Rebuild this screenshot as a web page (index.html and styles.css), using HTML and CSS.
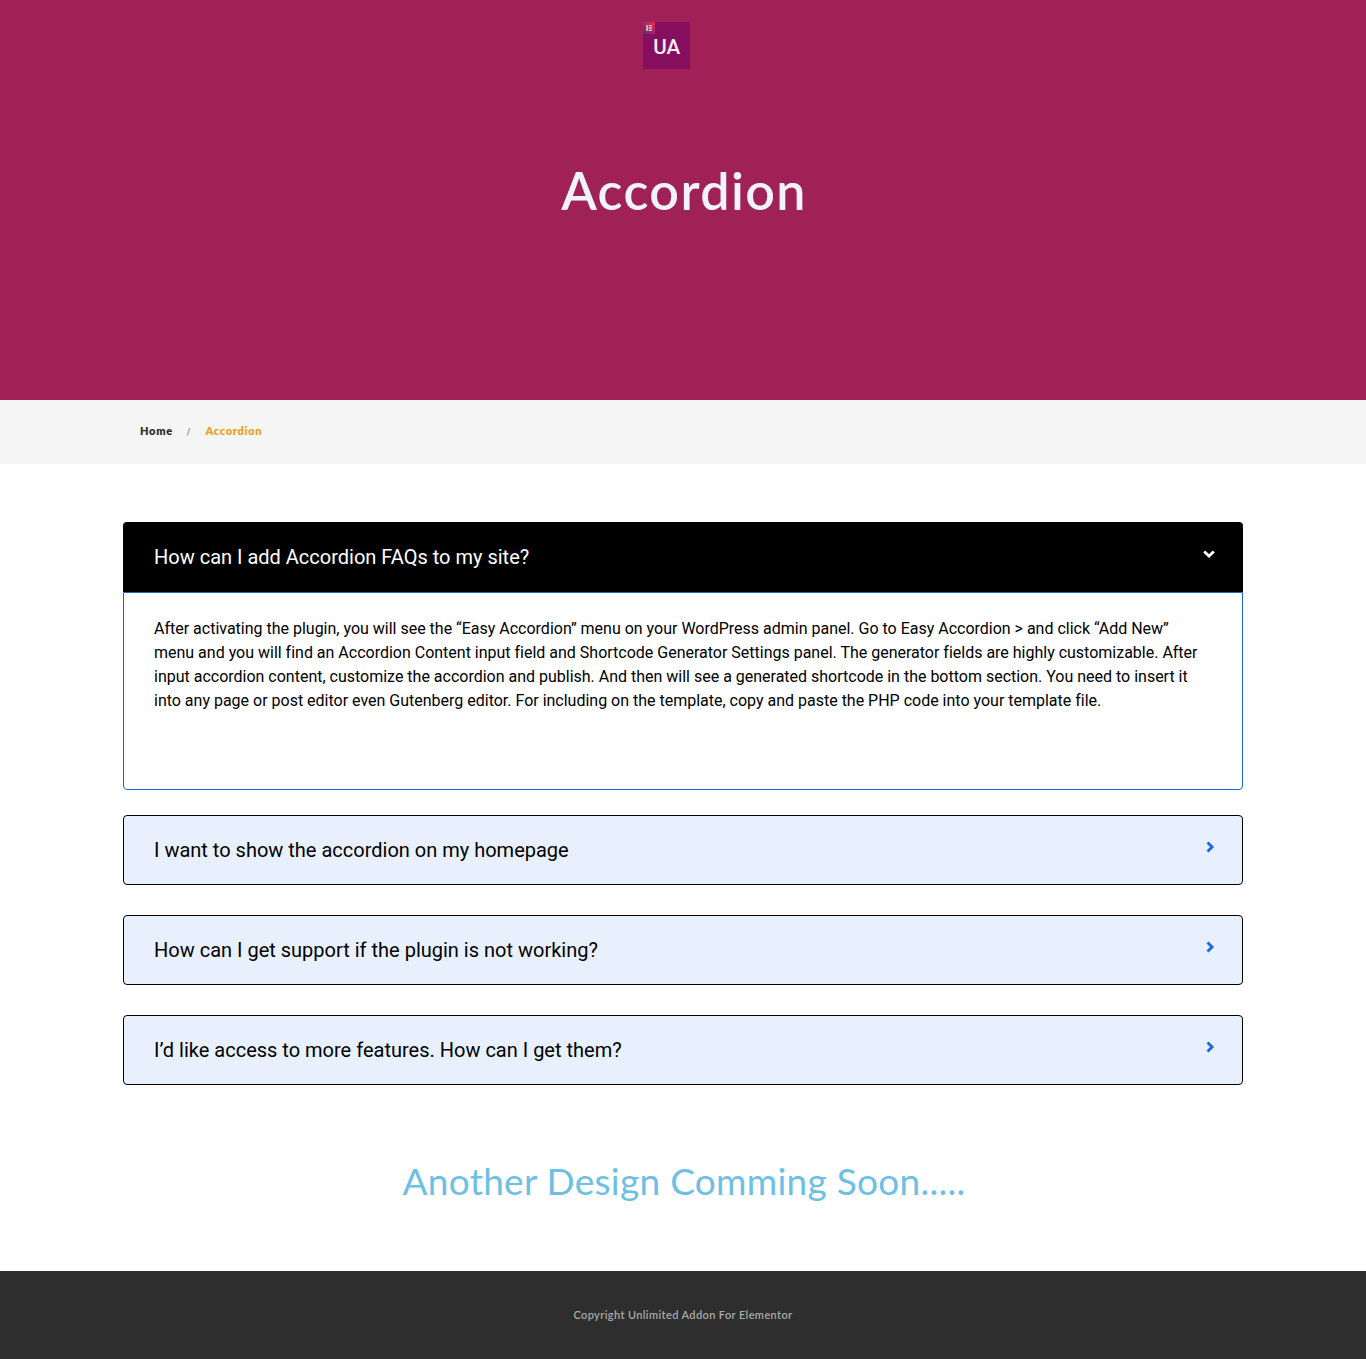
FILE: index.html
```html
<!DOCTYPE html>
<html lang="en">
<head>
<meta charset="utf-8">
<title>Accordion</title>
<link rel="stylesheet" href="styles.css">
</head>
<body>
<header class="hero">
  <svg class="logo" viewBox="0 0 47 47" role="img" aria-label="UA">
    <defs><linearGradient id="badge" x1="0" y1="1" x2="1" y2="0"><stop offset="0" stop-color="#563078"/><stop offset=".55" stop-color="#ad275f"/><stop offset="1" stop-color="#e82a4c"/></linearGradient></defs>
    <rect width="47" height="47" fill="#850f5e"/>
    <rect width="12" height="12" fill="url(#badge)"/>
    <path d="M3.2 3h1.6v6H3.2zM5.6 3H9v1.3H5.6zM5.6 5.35H9v1.3H5.6zM5.6 7.7H9V9H5.6z" fill="#eee" opacity=".8"/>
    <text class="logo-text" x="10.2" y="32" textLength="27" lengthAdjust="spacingAndGlyphs">UA</text>
  </svg>
  <h1 class="hero-title">Accordion</h1>
</header>
<nav class="crumbs">
  <a class="crumb">Home</a><span class="slash">/</span><span class="crumb current">Accordion</span>
</nav>
<main class="content">
  <section class="item open">
    <h2 class="question"><span class="label">How can I add Accordion FAQs to my site?</span>
      <svg class="arrow down" viewBox="0 0 12 8"><path d="M1.2 1.5 6 6.1l4.8-4.6"/></svg></h2>
    <div class="answer">
      After activating the plugin, you will see the “Easy Accordion” menu on your WordPress admin panel. Go to Easy Accordion &gt; and click “Add New”<br>
      menu and you will find an Accordion Content input field and Shortcode Generator Settings panel. The generator fields are highly customizable. After<br>
      input accordion content, customize the accordion and publish. And then will see a generated shortcode in the bottom section. You need to insert it<br>
      into any page or post editor even Gutenberg editor. For including on the template, copy and paste the PHP code into your template file.
    </div>
  </section>
  <section class="item">
    <h2 class="question"><span class="label">I want to show the accordion on my homepage</span>
      <svg class="arrow" viewBox="0 0 8 12"><path d="M1.5 1.4 6.1 6l-4.6 4.6"/></svg></h2>
  </section>
  <section class="item">
    <h2 class="question"><span class="label">How can I get support if the plugin is not working?</span>
      <svg class="arrow" viewBox="0 0 8 12"><path d="M1.5 1.4 6.1 6l-4.6 4.6"/></svg></h2>
  </section>
  <section class="item">
    <h2 class="question"><span class="label">I’d like access to more features. How can I get them?</span>
      <svg class="arrow" viewBox="0 0 8 12"><path d="M1.5 1.4 6.1 6l-4.6 4.6"/></svg></h2>
  </section>
  <p class="soon">Another Design Comming Soon.....</p>
</main>
<footer class="footer">Copyright Unlimited Addon For Elementor</footer>
</body>
</html>
```
FILE: styles.css
```css
* { box-sizing: border-box; }
body { margin: 0; background: #fff; color: #000; font-family: Roboto, sans-serif; }
.hero {
  height: 400px;
  padding-top: 22px;
  background: #a02058;
  display: flex;
  flex-direction: column;
  align-items: center;
}
.logo { width: 47px; height: 47px; margin-right: 33px; }
.logo-text { font: 500 20px Roboto, sans-serif; fill: #f4edf4; }
.hero-title {
  margin: 91px 0 0 2px;
  font: 600 52px/60px Lato, sans-serif;
  letter-spacing: 1.4px;
  white-space: nowrap;
  color: #f1f3f8;
}
.crumbs {
  height: 64px;
  padding: 0 0 2px 140px;
  background: #f5f5f5;
  display: flex;
  align-items: center;
  font: 800 11px/16px Lato, sans-serif;
  letter-spacing: .7px;
}
.crumb { color: #2d2d2d; }
.slash { margin: 2px 14px 0 13.5px; font-size: 9px; color: #999; }
.current { color: #eba218; }
.content { width: 1120px; height: 807px; margin: 0 auto; padding-top: 58px; }
.item {
  height: 70px;
  margin-bottom: 30px;
  border: 1px solid #000;
  border-radius: 4px;
  background: #e8f0fd;
}
.question {
  height: 68px;
  margin: 0;
  padding: 0 28px 0 30px;
  display: flex;
  align-items: center;
  justify-content: space-between;
  font-size: 20px;
  line-height: 30px;
  font-weight: 400;
}
.arrow {
  width: 8px;
  height: 12px;
  margin-bottom: 6px;
  fill: none;
  stroke: #1a67df;
  stroke-width: 2.8;
  overflow: visible;
}
.down { width: 12px; height: 8px; margin-bottom: 7px; margin-right: -1px; stroke: #fff; }
.open { height: 268px; margin-bottom: 25px; border: 0; background: #fff; }
.open .question {
  height: 70px;
  padding: 0 29px 0 31px;
  background: #000;
  color: #fff;
  border-radius: 4px 4px 0 0;
}
.answer {
  height: 198px;
  padding: 24px 30px;
  border: 1px solid #1a67d2;
  border-radius: 0 0 4px 4px;
  font-size: 16px;
  line-height: 24px;
  letter-spacing: -.005px;
  white-space: nowrap;
}
.soon {
  margin: 66px 0 0;
  padding-left: 2px;
  text-align: center;
  font: 400 37px/60px Lato, sans-serif;
  letter-spacing: .27px;
  white-space: nowrap;
  color: #6ebfe5;
}
.footer {
  height: 88px;
  background: #2e2e2e;
  color: #a9a9a9;
  display: flex;
  align-items: center;
  justify-content: center;
  font: 600 11px/16px Lato, sans-serif;
  letter-spacing: .38px;
}
```
